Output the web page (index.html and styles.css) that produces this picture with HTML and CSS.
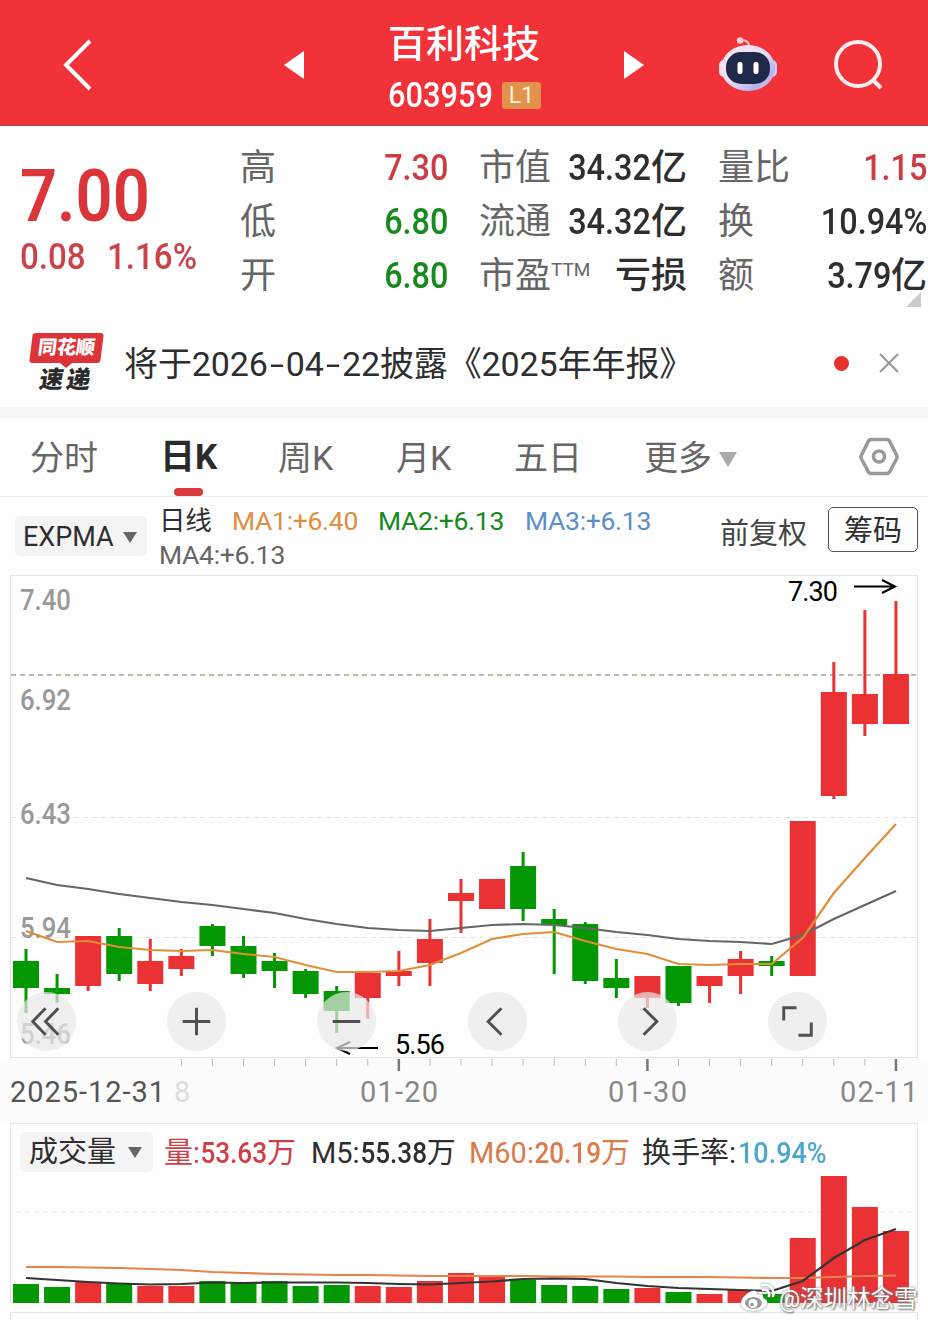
FILE: index.html
```html
<!DOCTYPE html>
<html lang="zh-CN">
    <head>
        <meta charset="utf-8">
        <title>百利科技 603959</title>
        <link rel="stylesheet" href="styles.css">
    </head>
    <body>
        <div id="header">
            <svg class="back" width="30" height="54" viewBox="0 0 30 54"><path d="M27 3 L3 27 L27 51"/></svg>
            <svg class="prev" width="20" height="28" viewBox="0 0 20 28"><path d="M20 0 V28 L0 14 Z"/></svg>
            <div class="title">
                <div class="name">百利科技</div>
                <div class="code"><span class="num">603959</span><span class="level">L1</span></div>
            </div>
            <svg class="next" width="20" height="28" viewBox="0 0 20 28"><path d="M0 0 L20 14 L0 28 Z"/></svg>
            <svg class="robot" width="60" height="56" viewBox="0 0 60 56">
                <defs>
                    <linearGradient id="shell" x1="0" y1="0" x2="1" y2="1">
                        <stop offset="0" stop-color="#ffe9ee"/>
                        <stop offset=".5" stop-color="#e6def6"/>
                        <stop offset=".78" stop-color="#b5b0ee"/>
                        <stop offset="1" stop-color="#f3d5e6"/>
                    </linearGradient>
                </defs>
                <path d="M22 4.500 Q31 3 31 11" fill="none" stroke="#ffc4c9" stroke-width="2"/>
                <circle cx="22" cy="4.500" r="3.200" fill="#ffd3d6"/>
                <rect x="1" y="24" width="10" height="17" rx="5" fill="#f7dbea"/>
                <rect x="49" y="24" width="10" height="17" rx="5" fill="#d5c9f2"/>
                <ellipse cx="30" cy="32" rx="27" ry="23" fill="url(#shell)"/>
                <rect x="8" y="16" width="44" height="32" rx="15" fill="#20294a"/>
                <rect x="19.500" y="26" width="5" height="12" rx="2" fill="#fff"/>
                <rect x="35.500" y="26" width="5" height="12" rx="2" fill="#fff"/>
            </svg>
            <svg class="search" width="52" height="52" viewBox="0 0 52 52"><circle cx="25" cy="25" r="22"/><path d="M39 40 L48 49"/></svg>
        </div>

        <div id="quote">
            <div class="price">
                <div class="last"><span class="num">7.00</span></div>
                <div class="change"><span class="num">0.08</span><span class="num">1.16%</span></div>
            </div>
            <div class="item"><span>高</span><b class="up"><span class="num">7.30</span></b></div>
            <div class="item"><span>市值</span><b><span class="num">34.32</span>亿</b></div>
            <div class="item"><span>量比</span><b class="up"><span class="num">1.15</span></b></div>
            <div class="item"><span>低</span><b class="down"><span class="num">6.80</span></b></div>
            <div class="item"><span>流通</span><b><span class="num">34.32</span>亿</b></div>
            <div class="item"><span>换</span><b><span class="num">10.94%</span></b></div>
            <div class="item"><span>开</span><b class="down"><span class="num">6.80</span></b></div>
            <div class="item"><span>市盈<sup>TTM</sup></span><b>亏损</b></div>
            <div class="item"><span>额</span><b><span class="num">3.79</span>亿</b></div>
            <i class="corner"></i>
        </div>

        <div id="news">
            <div class="logo">
                <div class="logo-top">同花顺</div>
                <div class="logo-bottom">速递</div>
            </div>
            <div class="headline">将于2026<i>-</i>04<i>-</i>22披露《2025年年报》</div>
            <i class="dot"></i>
            <svg width="22" height="22" viewBox="0 0 22 22"><path d="M2 2 L20 20 M20 2 L2 20"/></svg>
        </div>

        <div id="tabs">
            <div class="tab">分时</div>
            <div class="tab active">日K</div>
            <div class="tab">周K</div>
            <div class="tab">月K</div>
            <div class="tab">五日</div>
            <div class="tab more">更多<i class="caret"></i></div>
            <svg width="40" height="40" viewBox="0 0 40 40"><path d="M12 2.500 H28 Q29.500 2.500 30.500 4 L37.500 18 Q38.500 20 37.500 22 L30.500 35 Q29.500 36.500 28 36.500 H12 Q10.500 36.500 9.500 35 L2.500 22 Q1.500 20 2.500 18 L9.500 4 Q10.500 2.500 12 2.500 Z"/><circle cx="20" cy="19.500" r="5.500"/></svg>
        </div>

        <div id="legend">
            <div class="picker">EXPMA<i class="caret"></i></div>
            <div class="averages">
                <span class="cycle">日线</span>
                <span class="ma1">MA1:+6.40</span>
                <span class="ma2">MA2:+6.13</span>
                <span class="ma3">MA3:+6.13</span>
                <span class="ma4">MA4:+6.13</span>
            </div>
            <div class="adjust">前复权</div>
            <div class="chips">筹码</div>
        </div>

        <div id="kline">
            <svg id="kchart" width="928" height="548" viewBox="0 575 928 548">
                <rect x="0" y="1059" width="928" height="64" fill="#fcfcfc"/>
                <rect class="frame" x="10.500" y="575.500" width="907" height="482"/>
                <path class="grid" d="M11 817.500 H917 M11 937.500 H917"/>
                <path d="M11 675 H917" stroke="#aaa58f" stroke-width="1.500" stroke-dasharray="5 4"/>
                <g class="ylabels">
                    <text x="20" y="610" textLength="51" lengthAdjust="spacingAndGlyphs">7.40</text>
                    <text x="20" y="710" textLength="51" lengthAdjust="spacingAndGlyphs">6.92</text>
                    <text x="20" y="824" textLength="51" lengthAdjust="spacingAndGlyphs">6.43</text>
                    <text x="20" y="938" textLength="51" lengthAdjust="spacingAndGlyphs">5.94</text>
                    <text x="20" y="1044" textLength="51" lengthAdjust="spacingAndGlyphs">5.46</text>
                </g>
                <g id="candles"></g>
                <g class="marks">
                    <text x="788" y="601" textLength="50">7.30</text>
                    <path d="M854 586.500 H895 M882 580 L895 586.500 L882 593"/>
                    <text x="395" y="1054" textLength="50">5.56</text>
                    <path d="M378 1048 H337 M350 1042 L337 1048 L350 1054"/>
                </g>
                <g id="ticks"></g>
                <g class="dates">
                    <text x="10" y="1102" textLength="155" fill="#555">2025-12-31</text>
                    <text x="174" y="1102" textLength="15" fill="#ddd">8</text>
                    <text x="360" y="1102" textLength="78">01-20</text>
                    <text x="608" y="1102" textLength="79">01-30</text>
                    <text x="840" y="1102" textLength="78">02-11</text>
                </g>
            </svg>
            <div class="controls">
                <button><svg viewBox="0 0 60 60"><path d="M29 16.500 L16 30 L29 43.500 M42 16.500 L29 30 L42 43.500"/></svg></button>
                <button><svg viewBox="0 0 60 60"><path d="M30 16 V44 M16 30 H44"/></svg></button>
                <button><svg viewBox="0 0 60 60"><path d="M16 30 H44"/></svg></button>
                <button><svg viewBox="0 0 60 60"><path d="M34 16.500 L20.500 30 L34 43.500"/></svg></button>
                <button><svg viewBox="0 0 60 60"><path d="M26 16.500 L39.500 30 L26 43.500"/></svg></button>
                <button><svg viewBox="0 0 60 60"><path d="M16 29 V16 H29 M31 44 H44 V31"/></svg></button>
            </div>
        </div>

        <div id="volume">
            <div class="vol-head">
                <div class="picker">成交量<i class="caret"></i></div>
                <span class="v1">量:<span class="num">53.63</span>万</span>
                <span class="v2">M5:<span class="num">55.38</span>万</span>
                <span class="v3">M60:<span class="num">20.19</span>万</span>
                <span class="v4">换手率:<em class="num">10.94%</em></span>
            </div>
            <svg id="vchart" width="928" height="148" viewBox="0 1172 928 148"></svg>
            <div class="watermark">
                <svg width="36" height="30" viewBox="0 0 36 30">
                    <path d="M12 8 C4 11 0 18 1 22 C3 30 24 30 27 21 C28 17 25 16 23 15 C24 11 21 10 17 12 C17 8 15 7 12 8 Z" fill="#fff"/>
                    <ellipse cx="13.500" cy="20" rx="8.500" ry="6" fill="#999"/>
                    <circle cx="13" cy="20.500" r="4.500" fill="#fff"/>
                    <circle cx="12" cy="21.500" r="1.800" fill="#999"/>
                    <path d="M22 2 C29 0 35 6 33 13 M23 7 C27 6 30 9 29 13" fill="none" stroke="#fff" stroke-width="2.500" stroke-linecap="round"/>
                </svg>
                <span>@深圳林念雪</span>
            </div>
        </div>

        <script>
            document.addEventListener('DOMContentLoaded', () => {
                const RED = '#ea3134';
                const GREEN = '#039803';
                const step = 31.07;
                const startX = 26;
                const barWidth = 26;
                const volumeBase = 1303;

                // colour, body top, body bottom, wick top, wick bottom, volume top
                const days = [
                    ['g', 961, 988, 949, 1013, 1284],
                    ['g', 988, 994, 974, 1003, 1287],
                    ['r', 936, 986, 936, 991, 1282],
                    ['g', 936, 974, 928, 981, 1283],
                    ['r', 961, 984, 939, 991, 1286],
                    ['r', 956, 969, 949, 976, 1286],
                    ['g', 926, 946, 924, 956, 1281],
                    ['g', 946, 974, 936, 978, 1282],
                    ['g', 961, 971, 953, 988, 1281],
                    ['g', 971, 994, 969, 998, 1286],
                    ['g', 991, 1011, 986, 1033, 1285],
                    ['r', 973, 998, 971, 1019, 1286],
                    ['r', 971, 976, 951, 986, 1287],
                    ['r', 939, 963, 919, 986, 1281],
                    ['r', 893, 901, 879, 933, 1273],
                    ['r', 879, 909, 879, 909, 1277],
                    ['g', 866, 909, 852, 921, 1280],
                    ['g', 919, 925, 909, 974, 1285],
                    ['g', 924, 981, 922, 984, 1286],
                    ['g', 978, 988, 959, 998, 1289],
                    ['r', 976, 998, 976, 1008, 1288],
                    ['g', 966, 1003, 966, 1006, 1292],
                    ['r', 976, 986, 976, 1003, 1294],
                    ['r', 959, 976, 951, 994, 1290],
                    ['g', 961, 966, 956, 976, 1294],
                    ['r', 821, 976, 821, 976, 1238],
                    ['r', 692, 796, 662, 799, 1176],
                    ['r', 694, 724, 610, 736, 1207],
                    ['r', 674, 724, 601, 724, 1231]
                ];
                const ma1 = [931, 942, 941, 947, 950, 951, 950, 954, 957, 965, 972, 972, 971, 965, 953, 939, 934, 932, 941, 949, 954, 964, 965, 964, 964, 938, 893, 858, 824];
                const ma4 = [878, 885, 889, 894, 898, 902, 905, 909, 913, 919, 924, 928, 930, 931, 928, 925, 924, 925, 928, 932, 935, 939, 941, 942, 944, 935, 919, 905, 891];
                const m5 = [1278, 1280, 1282, 1283.5, 1284.5, 1284, 1282.5, 1283, 1282.5, 1282.5, 1282.5, 1283, 1284, 1284.5, 1283, 1281.5, 1279, 1278.5, 1279, 1283, 1286, 1288, 1289, 1290, 1291, 1281, 1258, 1240, 1229];
                const m60 = [1267, 1267, 1267.5, 1268, 1269, 1270, 1272, 1273, 1274, 1274.5, 1275, 1275, 1275.5, 1276, 1276, 1276, 1276, 1276.5, 1276.5, 1276.5, 1277, 1277, 1277, 1277.5, 1278, 1278, 1277, 1276, 1275.5];

                const x = i => startX + step * i;
                const rect = (cx, w, top, bottom, color) => `<rect x="${cx - w / 2}" y="${top}" width="${w}" height="${bottom - top}" fill="${color}"/>`;
                const line = (values, color) => `<polyline points="${values.map((y, i) => x(i) + ',' + y).join(' ')}" fill="none" stroke="${color}" stroke-width="2.2"/>`;

                let candles = '';
                let volumes = '<path class="grid" d="M16 1212 H912"/><path class="frame" d="M10.500 1172 V1302.500 H917.500 V1172 M10.500 1320 V1312.500 H917.500 V1320"/>';
                let ticks = '';
                days.forEach(([type, top, bottom, high, low, volume], i) => {
                    const color = type === 'r' ? RED : GREEN;
                    candles += rect(x(i), 3, high, low, color) + rect(x(i), barWidth, top, bottom, color);
                    volumes += rect(x(i), barWidth, volume, volumeBase, color);
                    if (i >= 5) {
                        const major = i === 12 || i === 20 || i === 28;
                        ticks += major ? rect(x(i), 2.5, 1059, 1071, '#777') : rect(x(i), 1, 1059, 1066, '#bbb');
                    }
                });

                document.getElementById('candles').innerHTML = candles + line(ma4, '#666') + line(ma1, '#df8f38');
                document.getElementById('ticks').innerHTML = ticks;
                document.getElementById('vchart').innerHTML = volumes + line(m60, '#e5824e') + line(m5, '#333');
            });
        </script>
    </body>
</html>
```
FILE: styles.css
```css
*{
    box-sizing: border-box;
}
body{
    margin: 0;
    width: 928px;
    height: 1320px;
    overflow: hidden;
    background: #fefefe;
    color: #2e2e2e;
    font-family: Roboto, "Noto Sans CJK SC", sans-serif;
}
i, em{
    font-style: normal;
}
svg{
    display: block;
    flex: none;
}
.num{
    display: inline-block;
    transform: scaleX(.9);
    transform-origin: right center;
    font-weight: 500;
}
.caret{
    display: inline-block;
    border: 7.500px solid transparent;
    border-top: 11px solid #666;
    border-bottom: 0;
}

/* header */
#header{
    display: flex;
    align-items: center;
    height: 126px;
    padding: 5px 0 0 63px;
    background: #f13239;
    border-bottom: 1px solid #a8484b;
    color: #fff;
}
.back{
    fill: none;
    stroke: #fff;
    stroke-width: 4;
}
.prev, .next{
    fill: #fff;
}
.prev{
    margin-left: 191px;
}
.title{
    width: 156px;
    margin: 7px 80px 0 84px;
}
.name{
    font-size: 38px;
    font-weight: 500;
    line-height: 54px;
}
.code{
    display: flex;
    align-items: center;
    height: 50px;
    font-size: 35px;
    line-height: 50px;
}
.code .num{
    width: 104px;
    transform: scaleX(.88);
    transform-origin: left center;
}
.level{
    flex: none;
    width: 39px;
    height: 27px;
    margin-left: 10px;
    border-radius: 3px;
    background: #e2924c;
    color: #fff3d8;
    font-size: 23px;
    line-height: 28px;
    text-align: center;
}
.robot{
    margin: -2px 0 0 74px;
}
.search{
    margin-left: 55px;
    fill: none;
    stroke: #ffeeee;
    stroke-width: 4;
}

/* quote */
#quote{
    position: relative;
    display: grid;
    grid-template-columns: 189px 208px 208px 209px;
    grid-template-rows: 54px 54px 54px;
    column-gap: 31px;
    height: 184px;
    padding: 15px 0 0 20px;
}
.price{
    grid-row: 1 / 4;
    color: #d9353a;
}
.price .num{
    transform-origin: left center;
}
.last{
    height: 90px;
    padding-top: 12px;
    font-size: 73px;
    line-height: 86px;
}
.last .num{
    font-weight: 600;
    transform: scaleX(.89);
}
.change{
    display: flex;
    height: 60px;
    padding-top: 5px;
    color: #c8444a;
    font-size: 36px;
    line-height: 42px;
}
.change .num{
    transform: scaleX(.92);
}
.change .num:first-child{
    width: 87px;
}
.item{
    display: flex;
    justify-content: space-between;
    font-size: 36px;
    line-height: 54px;
    white-space: nowrap;
    color: #666;
}
.item b{
    color: #2e2e2e;
    font-weight: 500;
}
.item .up{
    color: #cb3d43;
}
.item .down{
    color: #168a1c;
}
.item sup{
    font-size: 19px;
    line-height: 0;
    vertical-align: 12px;
}
.corner{
    position: absolute;
    left: 906px;
    top: 166px;
    border-left: 15px solid transparent;
    border-bottom: 15px solid #ccc;
}

/* news */
#news{
    display: flex;
    align-items: center;
    height: 97px;
    padding: 9px 0 0 31px;
}
.logo{
    position: relative;
    width: 71px;
    height: 60px;
    margin-right: 22px;
    font-weight: 900;
    text-align: center;
}
.logo::after{
    content: "";
    position: absolute;
    left: 29px;
    top: 30px;
    border: 6px solid transparent;
    border-top: 5px solid #dc3439;
    border-bottom: 0;
}
.logo-top{
    height: 30px;
    border-radius: 3px;
    background: #dc3439;
    color: #fff;
    font-size: 19px;
    line-height: 29px;
    transform: skewX(-7deg);
}
.logo-bottom{
    color: #2b2b2b;
    font-size: 24px;
    letter-spacing: 3px;
    line-height: 35px;
    transform: skewX(-9deg);
}
.headline{
    width: 710px;
    margin-top: -4px;
    font-size: 34px;
    letter-spacing: -.1px;
}
.headline i{
    display: inline-block;
    width: 18px;
    text-align: center;
    transform: scaleX(1.5);
}
.dot{
    width: 15px;
    height: 15px;
    border-radius: 50%;
    background: #e7322f;
    margin-right: 29px;
}
#news svg{
    stroke: #999;
    stroke-width: 2.2;
}

/* period tabs */
#tabs{
    display: flex;
    align-items: center;
    height: 90px;
    padding-left: 30px;
    border-top: 11px solid #f6f6f6;
    border-bottom: 1px solid #eaeaea;
    color: #666;
    font-size: 34px;
}
.tab{
    position: relative;
    width: 118px;
    height: 78px;
    line-height: 80px;
    white-space: nowrap;
}
.tab:first-child{
    width: 130px;
}
.active{
    color: #2a2a2a;
    font-size: 35px;
    font-weight: 700;
}
.active::after{
    content: "";
    position: absolute;
    left: 14px;
    bottom: 0;
    width: 29px;
    height: 8px;
    border-radius: 4px;
    background: #da373b;
}
.more{
    width: 215px;
    margin-left: 12px;
}
.more .caret{
    border-width: 15px 9px 0;
    border-top-color: #aaa;
    margin: 0 0 0 7px;
    vertical-align: 3px;
}
#tabs svg{
    fill: none;
    stroke: #999;
    stroke-width: 3.5;
}

/* indicator legend */
#legend{
    display: flex;
    height: 78px;
    padding-left: 15px;
}
.picker{
    display: flex;
    align-items: center;
    justify-content: space-between;
    height: 40px;
    border-radius: 5px;
    background: #f4f4f4;
}
#legend .picker{
    width: 132px;
    margin-top: 19px;
    padding: 2px 10px 0 8px;
    font-size: 27px;
}
.averages{
    display: grid;
    grid-template-columns: 73px 146px 147px 146px;
    grid-template-rows: 34px 34px;
    width: 561px;
    padding: 6px 0 0 12px;
    font-size: 26.500px;
    line-height: 35px;
    white-space: nowrap;
}
.averages span{
    letter-spacing: -.3px;
}
.ma1{
    color: #dc8f3e;
}
.ma2{
    color: #168a1c;
}
.ma3{
    color: #5a8fca;
}
.averages .ma4{
    grid-column: 1 / 4;
    color: #666;
}
.adjust{
    width: 108px;
    margin-left: 12px;
    padding-top: 12px;
    color: #444;
    font-size: 29px;
    line-height: 50px;
    white-space: nowrap;
}
.chips{
    width: 90px;
    height: 45px;
    margin-top: 10px;
    border: 1px solid #555;
    border-radius: 5px;
    font-size: 29px;
    line-height: 47px;
    text-align: center;
}

/* charts */
#kline{
    position: relative;
    height: 548px;
}
.frame{
    fill: none;
    stroke: #e4e4e4;
}
.grid{
    stroke: #e4e4e4;
    stroke-dasharray: 5 4;
}
text{
    font-size: 29px;
}
#kchart text{
    font-weight: 500;
}
.ylabels text{
    fill: #999;
}
#kchart .marks text{
    fill: #000;
    font-size: 27px;
    font-weight: 400;
}
.marks path{
    fill: none;
    stroke: #000;
    stroke-width: 2;
}
.dates{
    fill: #888;
}
#kchart .dates text{
    font-weight: 400;
}
.controls{
    position: absolute;
    left: 17px;
    top: 417px;
    display: flex;
    gap: 91.200px;
}
.controls button{
    width: 59px;
    height: 59px;
    padding: 0;
    border: none;
    border-radius: 50%;
    background: rgba(232, 232, 232, .7);
}
.controls svg{
    fill: none;
    stroke: #505050;
    stroke-width: 3;
}

/* volume */
#volume{
    position: relative;
    height: 197px;
}
.vol-head{
    display: flex;
    height: 49px;
    margin: 0 10px;
    padding: 8px 0 0 9px;
    border: 1px solid #e4e4e4;
    border-bottom: 0;
    font-size: 29px;
    line-height: 42px;
    white-space: nowrap;
}
.vol-head .picker{
    width: 133px;
    margin-right: 11px;
    padding: 0 11px 0 9px;
}
.vol-head > span{
    font-weight: 400;
}
.vol-head .num{
    margin-left: -7px;
}
.v1{
    width: 147px;
    color: #cf3f45;
}
.v2{
    width: 158px;
}
.v3{
    width: 173px;
    color: #dc7a4c;
}
.v4 em{
    color: #4ea6cc;
}
.vol-head .v4 .num{
    margin-left: 2px;
    transform: scaleX(.93);
    transform-origin: left center;
}
.watermark{
    position: absolute;
    left: 740px;
    top: 160px;
    display: flex;
    gap: 3px;
    color: #fff;
    font-size: 23.500px;
    line-height: 32px;
    white-space: nowrap;
    text-shadow: 0 0 3px #777, 1px 1px 2px #777;
}
.watermark svg{
    filter: drop-shadow(0 0 1px #777);
}
```
